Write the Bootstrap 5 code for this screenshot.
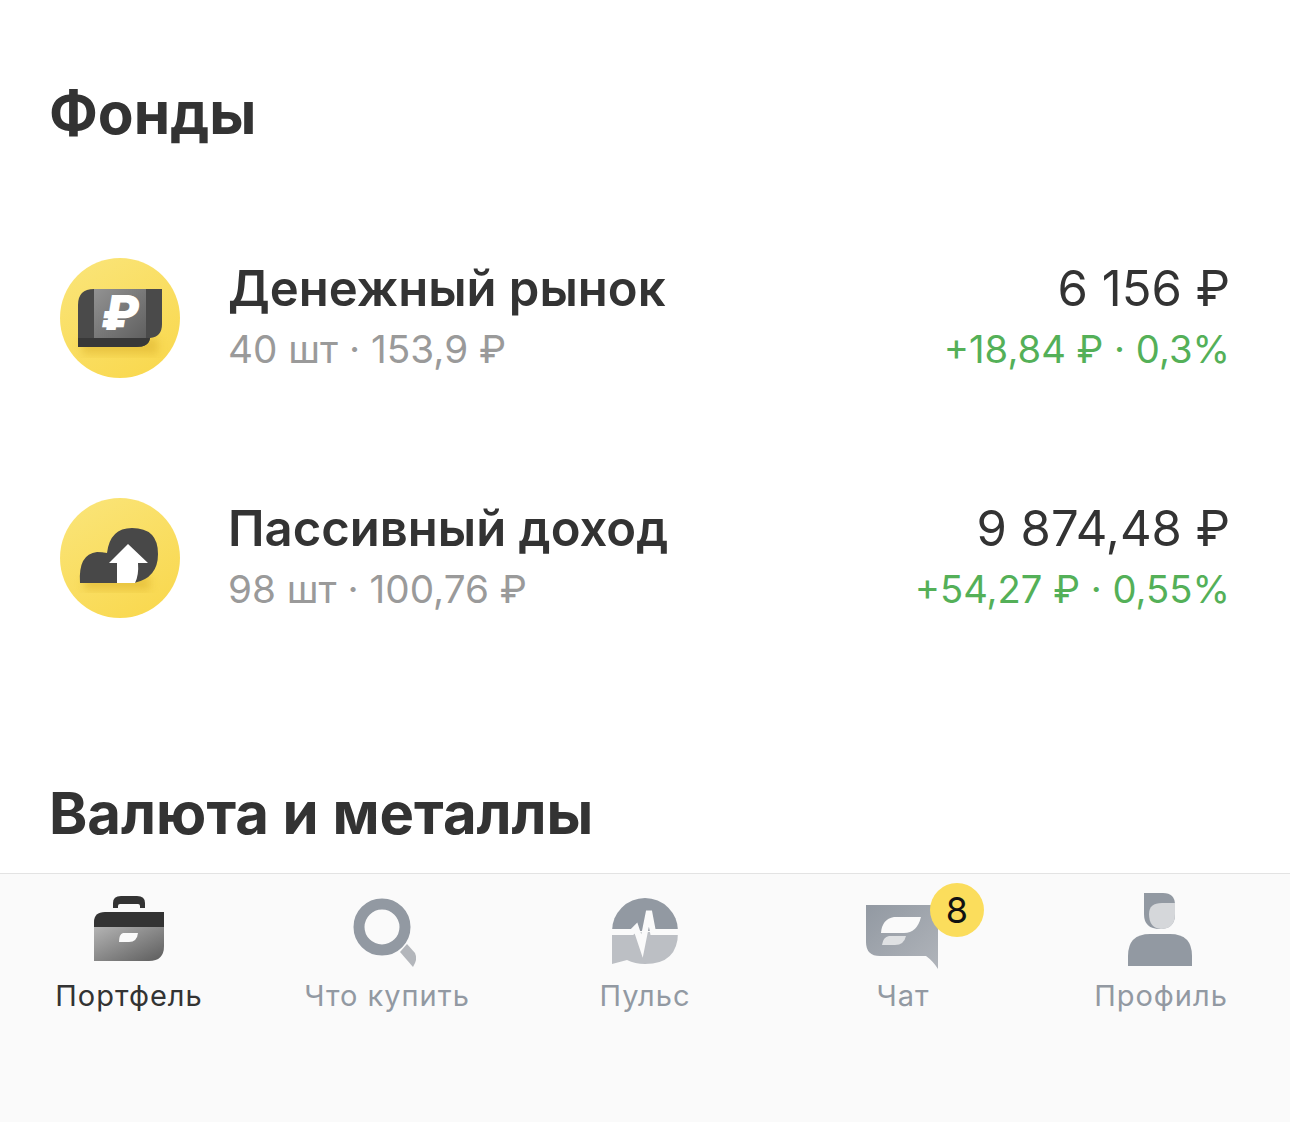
<!DOCTYPE html>
<html lang="ru">
<head>
  <meta charset="UTF-8">
  <title>Портфель</title>
  <link href="https://cdn.jsdelivr.net/npm/bootstrap@5.3.3/dist/css/bootstrap.min.css" rel="stylesheet">
  <style>
    body {
      width: 1290px;
      height: 1122px;
      overflow: hidden;
      font-family: Inter, "Liberation Sans", sans-serif;
      color: #333;
      background: #fff;
    }
    .page-main { padding: 83px 60px 0; }
    .section-title {
      font-family: Inter, sans-serif;
      font-size: 58.5px;
      font-weight: 700;
      line-height: 60px;
      margin: 0 0 0 -11px;
      color: #333;
    }
    .fund-list { margin-top: 115px; gap: 120px; }
    .fund-row { height: 120px; }
    .fund-icon { width: 120px; height: 120px; flex: none; display: block; }
    .fund-text { margin-left: 48px; margin-top: 2px; }
    .fund-name { font-size: 49px; font-weight: 600; line-height: 60px; }
    .fund-sub { font-size: 38.7px; line-height: 60px; color: #9a9a9a; }
    .fund-price { font-size: 49px; line-height: 60px; }
    .fund-gain { font-size: 38.2px; line-height: 60px; color: #54b058; }
    .second-title { margin-top: 165px; font-size: 58px; }
    .tab-bar {
      height: 249px;
      background: #fafafa;
      border-top: 1px solid #e3e3e3;
      flex: none;
    }
    .tab-item { padding-top: 16px; color: #9299a2; }
    .tab-item.active { color: #333; }
    .tab-icon { width: 80px; height: 80px; display: block; }
    .tab-label { font-size: 29px; line-height: 40px; letter-spacing: 1px; margin-top: 6px; }
    .tab-icon-wrap { width: 80px; }
    .chat-count {
      top: -7px;
      left: 67px;
      width: 54px;
      height: 54px;
      background: #fbdd5c;
      color: #111;
      font-size: 36px;
      line-height: 54px;
    }
  </style>
</head>
<body class="d-flex flex-column">
  <main class="page-main flex-grow-1">
    <h1 class="section-title">Фонды</h1>

    <div class="fund-list d-flex flex-column">
      <div class="fund-row d-flex align-items-center">
        <svg class="fund-icon" viewBox="0 0 120 120">
          <defs>
            <linearGradient id="coin1" x1="0.2" y1="0" x2="0.8" y2="1"><stop offset="0" stop-color="#fae477"/><stop offset="1" stop-color="#f9d84e"/></linearGradient>
            <linearGradient id="note" x1="0" y1="0" x2="1" y2="1"><stop offset="0" stop-color="#929292"/><stop offset="1" stop-color="#606060"/></linearGradient>
            <filter id="soft" x="-20%" y="-20%" width="140%" height="140%"><feGaussianBlur stdDeviation="4"/></filter>
          </defs>
          <circle cx="60" cy="60" r="60" fill="url(#coin1)"/>
          <rect x="22" y="80" width="76" height="16" fill="#d9ae25" opacity="0.5" filter="url(#soft)"/>
          <path d="M18 89V47Q18 31 34 31H102V66Q102 79 90 80Q89 89 76 89Z" fill="#4a4a4a"/>
          <path d="M18 80H90Q89 89 76 89H18Z" fill="#383838"/>
          <rect x="34" y="31" width="52" height="49" fill="url(#note)"/>
          <text x="60" y="72" text-anchor="middle" font-family="Inter, sans-serif" font-size="48" font-weight="900" font-style="italic" fill="#fff">₽</text>
        </svg>
        <div class="fund-text flex-grow-1">
          <div class="fund-name">Денежный рынок</div>
          <div class="fund-sub">40 шт · 153,9 ₽</div>
        </div>
        <div class="fund-text text-end">
          <div class="fund-price">6 156 ₽</div>
          <div class="fund-gain">+18,84 ₽ · 0,3%</div>
        </div>
      </div>

      <div class="fund-row d-flex align-items-center">
        <svg class="fund-icon" viewBox="0 0 120 120">
          <circle cx="60" cy="60" r="60" fill="url(#coin1)"/>
          <rect x="24" y="78" width="66" height="14" fill="#d9ae25" opacity="0.5" filter="url(#soft)"/>
          <path d="M20 85Q18 56 37 54Q42 54 47 55Q50 30 72 30Q98 30 98 56Q98 80 74 85Z" fill="#484848"/>
          <path d="M68 46L88 65H78Q79 77 75 85H57V65H49Z" fill="#fff"/>
        </svg>
        <div class="fund-text flex-grow-1">
          <div class="fund-name">Пассивный доход</div>
          <div class="fund-sub">98 шт · 100,76 ₽</div>
        </div>
        <div class="fund-text text-end">
          <div class="fund-price">9 874,48 ₽</div>
          <div class="fund-gain">+54,27 ₽ · 0,55%</div>
        </div>
      </div>
    </div>

    <h2 class="section-title second-title">Валюта и металлы</h2>
  </main>

  <nav class="tab-bar row g-0">
    <div class="tab-item active col d-flex flex-column align-items-center">
      <svg class="tab-icon" viewBox="0 0 80 80">
        <defs>
          <linearGradient id="caseFill" x1="0" y1="0" x2="1" y2="1"><stop offset="0" stop-color="#b4b4b4"/><stop offset="1" stop-color="#5c5c5c"/></linearGradient>
          <linearGradient id="chatFill" x1="0" y1="0" x2="1" y2="1"><stop offset="0" stop-color="#9299a2"/><stop offset="1" stop-color="#b0b4ba"/></linearGradient>
        </defs>
        <path d="M24 18V13Q24 6 32 6H48Q56 6 56 13V18H51V16Q51 14 49 14H31Q29 14 29 16V18Z" fill="#333"/>
        <path d="M5 37V32Q5 22 16 22H75V37Z" fill="#333"/>
        <path d="M5 37H75V56Q75 71 60 71H5Z" fill="url(#caseFill)"/>
        <path d="M34 43H49Q48 52 40 52H30Q30 44 34 43Z" fill="#fafafa"/>
      </svg>
      <div class="tab-label">Портфель</div>
    </div>
    <div class="tab-item col d-flex flex-column align-items-center">
      <svg class="tab-icon" viewBox="0 0 80 80">
        <path d="M53 62L60 54L68 63Q71 69 66 77Z" fill="#b3b6bb"/>
        <circle cx="35" cy="37" r="23" fill="none" stroke="#9299a2" stroke-width="11"/>
      </svg>
      <div class="tab-label">Что купить</div>
    </div>
    <div class="tab-item col d-flex flex-column align-items-center">
      <svg class="tab-icon" viewBox="0 0 80 80">
        <path d="M7 41A33 33 0 0 1 73 41Z" fill="#9299a2"/>
        <path d="M7 42H73Q73 74 40 74Q30 74 22 70L7 74Z" fill="#bcbfc4"/>
        <path d="M6 42H27L31 38L37 56L44 21L48 42H74" fill="none" stroke="#fafafa" stroke-width="6"/>
      </svg>
      <div class="tab-label">Пульс</div>
    </div>
    <div class="tab-item col d-flex flex-column align-items-center">
      <div class="tab-icon-wrap position-relative">
        <svg class="tab-icon" viewBox="0 0 80 80">
          <path d="M3 15H75V79Q70 71 63 66H17Q3 66 3 52Z" fill="url(#chatFill)"/>
          <path d="M31 27H58Q54 43 41 43H18Q19 29 31 27Z" fill="#fafafa"/>
          <path d="M26 46H43Q41 55 32 55H19Q20 47 26 46Z" fill="#dfe1e3"/>
        </svg>
        <span class="chat-count position-absolute rounded-circle text-center">8</span>
      </div>
      <div class="tab-label">Чат</div>
    </div>
    <div class="tab-item col d-flex flex-column align-items-center">
      <svg class="tab-icon" viewBox="0 0 80 80">
        <path d="M23 3H42Q54 3 54 15V24Q54 39 39 39Q23 39 23 24Z" fill="#9299a2"/>
        <path d="M28 24Q28 13 41 13H54V24Q54 39 40 39Q28 38 28 24Z" fill="#d5d7da"/>
        <path d="M7 76V66Q7 44 29 44H49Q71 44 71 66V76Z" fill="#9299a2"/>
      </svg>
      <div class="tab-label">Профиль</div>
    </div>
  </nav>
  <script src="https://cdn.jsdelivr.net/npm/bootstrap@5.3.3/dist/js/bootstrap.bundle.min.js"></script>
</body>
</html>
